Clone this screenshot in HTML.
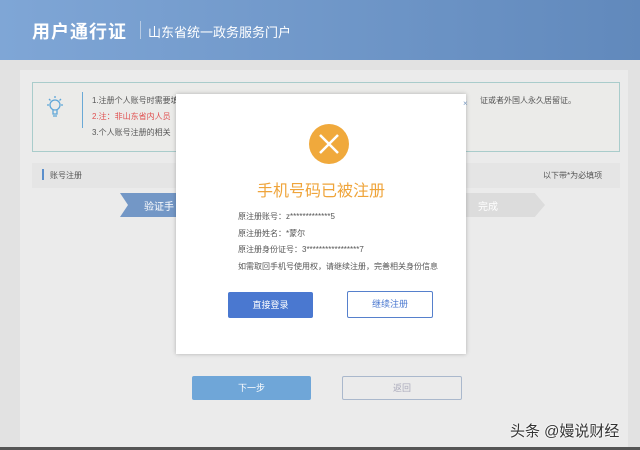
<!DOCTYPE html><html><head><meta charset="utf-8"><style>
*{margin:0;padding:0;box-sizing:border-box}
body{width:640px;height:450px;overflow:hidden;background:#e2e2e2;font-family:"Liberation Sans","Noto Sans CJK SC",sans-serif;position:relative;font-size:8px;color:#555}
.a{position:absolute}
</style></head><body>
<div class="a" style="left:0;top:0;width:640px;height:60px;background:linear-gradient(90deg,#7fa6d6,#6189bc);"></div>
<div class="a" style="left:32px;top:18px;font-size:18px;font-weight:bold;color:#fff;letter-spacing:1px">用户通行证</div>
<div class="a" style="left:140px;top:21px;width:1px;height:18px;background:#b8cbe4"></div>
<div class="a" style="left:148px;top:22px;font-size:13px;color:#fff">山东省统一政务服务门户</div>
<div class="a" style="left:20px;top:70px;width:608px;height:380px;background:#ebebeb"></div>
<div class="a" style="left:32px;top:82px;width:588px;height:70px;border:1px solid #a9cccb;background:#ebebe9"></div>
<div class="a" style="left:44px;top:94px;width:22px;height:26px;background:#ebebe9"><svg width="22" height="26"><g stroke="#5ea6d8" fill="none" stroke-width="1.3"><circle cx="11" cy="11" r="5"/><path d="M9 16v4h4v-4M9 22h4M11 2v2M3 11h2M17 11h2M5 5l1.5 1.5M17 5l-1.5 1.5"/></g></svg></div>
<div class="a" style="left:82px;top:92px;width:1px;height:36px;background:#6aa9d6"></div>
<div class="a" style="left:92px;top:95px">1.注册个人账号时需要填</div>
<div class="a" style="left:92px;top:111px;color:#e05050">2.注：非山东省内人员</div>
<div class="a" style="left:92px;top:127px">3.个人账号注册的相关</div>
<div class="a" style="left:480px;top:95px">证或者外国人永久居留证。</div>
<div class="a" style="left:32px;top:163px;width:588px;height:25px;background:#e5e5e5"></div>
<div class="a" style="left:42px;top:169px;width:2px;height:11px;background:#5b8fcc"></div>
<div class="a" style="left:50px;top:170px">账号注册</div>
<div class="a" style="left:543px;top:170px">以下带*为必填项</div>
<div class="a" style="left:120px;top:193px;width:80px;height:24px;background:#7397c6;clip-path:polygon(0 0,100% 0,100% 100%,0 100%,8px 50%)"></div>
<div class="a" style="left:144px;top:198px;font-size:10px;color:#fff">验证手</div>
<div class="a" style="left:460px;top:193px;width:85px;height:24px;background:#dcdcdc;clip-path:polygon(0 0,88% 0,100% 50%,88% 100%,0 100%)"></div>
<div class="a" style="left:478px;top:198px;font-size:10px;color:#fff">完成</div>
<div class="a" style="left:192px;top:376px;width:119px;height:24px;background:#6fa6d8;border-radius:2px;color:#fff;font-size:9px;text-align:center;line-height:24px">下一步</div>
<div class="a" style="left:342px;top:376px;width:120px;height:24px;border:1px solid #aab8cc;border-radius:2px;color:#aab;font-size:9px;text-align:center;line-height:22px">返回</div>
<div class="a" style="left:510px;top:420px;font-size:15px;color:#333;text-shadow:0 0 2px #fff,0 0 2px #fff">头条 @嫚说财经</div>
<div class="a" style="left:0;top:447px;width:640px;height:3px;background:#555"></div>
<div class="a" style="left:176px;top:94px;width:290px;height:260px;background:#fff;box-shadow:0 0 4px rgba(0,0,0,.25)"></div>
<div class="a" style="left:463px;top:99px;font-size:8px;color:#7a9ac0">×</div>
<div class="a" style="left:309px;top:124px;width:40px;height:40px;border-radius:50%;background:#f0a93c"><svg width="40" height="40"><path d="M11 11L29 29M29 11L11 29" stroke="#fff" stroke-width="2.5"/></svg></div>
<div class="a" style="left:176px;top:177px;width:290px;text-align:center;font-size:16px;color:#efa43a">手机号码已被注册</div>
<div class="a" style="left:238px;top:211px">原注册账号：z*************5</div>
<div class="a" style="left:238px;top:228px">原注册姓名：*蒙尔</div>
<div class="a" style="left:238px;top:244px">原注册身份证号：3*****************7</div>
<div class="a" style="left:238px;top:261px">如需取回手机号使用权，请继续注册，完善相关身份信息</div>
<div class="a" style="left:228px;top:292px;width:85px;height:26px;background:#4a78d0;border-radius:2px;color:#fff;font-size:9px;text-align:center;line-height:26px">直接登录</div>
<div class="a" style="left:347px;top:291px;width:86px;height:27px;border:1px solid #5680cc;border-radius:2px;color:#4a78d0;font-size:9px;text-align:center;line-height:25px">继续注册</div>
</body></html>
